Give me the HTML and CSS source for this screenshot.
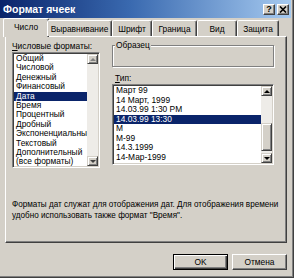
FILE: index.html
```html
<!DOCTYPE html>
<html lang="ru">
<head>
<meta charset="utf-8">
<title>Формат ячеек</title>
<link rel="stylesheet" href="styles.css">
</head>
<body>
<div class="window">
  <div class="titlebar">
    <span class="title">Формат ячеек</span>
    <div class="tbtns">
      <span class="tbtn help">?</span>
      <span class="tbtn close"><svg width="8" height="7" viewBox="0 0 8 7"><path d="M1 0.5 L7 6.5 M7 0.5 L1 6.5" stroke="#000" stroke-width="1.6" fill="none"/></svg></span>
    </div>
  </div>
  <div class="main">
    <div class="tabs">
      <div class="tab active t1">Число</div>
      <div class="tab t2">Выравнивание</div>
      <div class="tab t3">Шрифт</div>
      <div class="tab t4">Граница</div>
      <div class="tab t5">Вид</div>
      <div class="tab t6">Защита</div>
    </div>
    <div class="panel">
      <div class="cols">
        <div class="left">
          <div class="label"><u>Ч</u>исловые форматы:</div>
          <div class="listbox cat">
            <ul class="items">
              <li>Общий</li>
              <li>Числовой</li>
              <li>Денежный</li>
              <li>Финансовый</li>
              <li class="sel">Дата</li>
              <li>Время</li>
              <li>Процентный</li>
              <li>Дробный</li>
              <li>Экспоненциальный</li>
              <li>Текстовый</li>
              <li>Дополнительный</li>
              <li>(все форматы)</li>
            </ul>
            <div class="scroll">
              <div class="sbtn"><span class="arrow up dis"></span></div>
              <div class="track"></div>
              <div class="sbtn"><span class="arrow down dis"></span></div>
            </div>
          </div>
        </div>
        <div class="right">
          <div class="sample"><span class="legend">Образец</span></div>
          <div class="label type-label"><u>Т</u>ип:</div>
          <div class="listbox type">
            <ul class="items">
              <li>Март 99</li>
              <li>14 Март, 1999</li>
              <li>14.03.99 1:30 PM</li>
              <li class="sel">14.03.99 13:30</li>
              <li>М</li>
              <li>М-99</li>
              <li>14.3.1999</li>
              <li>14-Мар-1999</li>
            </ul>
            <div class="scroll">
              <div class="sbtn"><span class="arrow up"></span></div>
              <div class="track"><div class="thumb"></div></div>
              <div class="sbtn"><span class="arrow down"></span></div>
            </div>
          </div>
        </div>
      </div>
      <p class="desc">Форматы дат служат для отображения дат. Для отображения времени<br>удобно использовать также формат "Время".</p>
    </div>
    <div class="buttons">
      <div class="btn default">OK</div>
      <div class="btn">Отмена</div>
    </div>
  </div>
</div>
</body>
</html>
```

FILE: styles.css
```css
* { box-sizing: border-box; }
html, body { margin: 0; padding: 0; }
body {
  width: 294px;
  height: 278px;
  overflow: hidden;
  background: #d4d0c8;
  font-family: "Liberation Sans", Arial, sans-serif;
  font-size: 8.4px;
  color: #000;
}
.window {
  width: 294px;
  height: 278px;
  display: flex;
  flex-direction: column;
  padding: 0 3px 3px 0;
  background: #d4d0c8;
  box-shadow: inset -1px -1px 0 #404040, inset -2px -2px 0 #808080;
}
.titlebar {
  height: 18px;
  flex: none;
  display: flex;
  align-items: center;
  justify-content: space-between;
  padding: 0 2px 0 3px;
  background: linear-gradient(to right, #0a246a 0%, #3a6ab0 45%, #a6caf0 100%);
}
.title {
  color: #fff;
  font-weight: bold;
  font-size: 10.5px;
}
.tbtns { display: flex; gap: 2px; }
.tbtn {
  width: 12px;
  height: 11px;
  background: #d4d0c8;
  border: 1px solid;
  border-color: #fff #404040 #404040 #fff;
  box-shadow: inset -1px -1px 0 #808080;
  display: flex;
  align-items: center;
  justify-content: center;
  font-weight: bold;
  font-size: 9px;
  line-height: 1;
}
.tbtn svg { display: block; }
.main {
  flex: 1;
  display: flex;
  flex-direction: column;
  padding: 0 4px 0 5px;
}
.tabs {
  display: flex;
  align-items: flex-end;
  height: 18px;
  flex: none;
  position: relative;
  z-index: 1;
}
.tab {
  height: 16px;
  display: flex;
  align-items: center;
  justify-content: center;
  border: 1px solid;
  border-bottom: 0;
  border-color: #fff #404040 transparent #fff;
  box-shadow: inset -1px 0 0 #808080;
  border-radius: 2px 2px 0 0;
  background: #d4d0c8;
  padding-top: 1px;
}
.tab.active {
  height: 19px;
  margin: 0 -2px -1px;
  padding-top: 0;
  padding-bottom: 3px;
}
.t1 { width: 46px; }
.t2 { width: 65px; }
.t3 { width: 40px; }
.t4 { width: 45px; }
.t5 { width: 40px; }
.t6 { width: 42px; }
.panel {
  height: 207px;
  flex: none;
  border: 1px solid;
  border-color: #fff #404040 #404040 #fff;
  box-shadow: inset -1px -1px 0 #808080;
  padding: 4px 0 0 6px;
}
.cols { display: flex; gap: 12px; }
.left { width: 88px; }
.right { width: 162px; }
.label { height: 11px; line-height: 11px; white-space: nowrap; }
.type-label { margin-top: 6px; padding-left: 3px; }
.listbox {
  display: flex;
  background: #fff;
  border: 1px solid;
  border-color: #808080 #fff #fff #808080;
  box-shadow: inset 1px 1px 0 #404040, inset -1px -1px 0 #d4d0c8;
  padding: 1px;
  overflow: hidden;
}
.cat { height: 116px; }
.type { height: 81px; }
.items {
  list-style: none;
  margin: 0;
  padding: 0;
  flex: 1;
  min-width: 0;
}
.items li {
  height: 9.4px;
  line-height: 9.4px;
  padding-left: 2px;
  white-space: nowrap;
}
.type .items li { height: 9.5px; line-height: 9.5px; }
.items li.sel { background: #0a246a; color: #fff; }
.scroll {
  width: 11px;
  flex: none;
  display: flex;
  flex-direction: column;
}
.sbtn {
  height: 10px;
  flex: none;
  background: #d4d0c8;
  border: 1px solid;
  border-color: #d4d0c8 #404040 #404040 #d4d0c8;
  box-shadow: inset 1px 1px 0 #fff, inset -1px -1px 0 #808080;
  display: flex;
  align-items: center;
  justify-content: center;
}
.track {
  flex: 1;
  background: #eeece8;
}
.thumb {
  height: 28px;
  margin-top: 27px;
  background: #d4d0c8;
  border: 1px solid;
  border-color: #d4d0c8 #404040 #404040 #d4d0c8;
  box-shadow: inset 1px 1px 0 #fff, inset -1px -1px 0 #808080;
}
.arrow {
  width: 0;
  height: 0;
  border-left: 3px solid transparent;
  border-right: 3px solid transparent;
}
.arrow.up { border-bottom: 3px solid #000; }
.arrow.down { border-top: 3px solid #000; }
.arrow.up.dis { border-bottom-color: #808080; }
.arrow.down.dis { border-top-color: #404040; }
.sample {
  position: relative;
  margin-top: 4px;
  height: 22px;
  border: 1px solid #808080;
  box-shadow: 1px 1px 0 #fff, inset 1px 1px 0 #fff;
}
.legend {
  position: absolute;
  left: 2px;
  top: -6px;
  padding: 0 1px;
  background: #d4d0c8;
  line-height: 11px;
}
.desc {
  margin: 32px 0 0;
  font-size: 8.15px;
  line-height: 10.5px;
  white-space: nowrap;
}
.buttons {
  display: flex;
  justify-content: flex-end;
  gap: 4px;
  margin-top: 11px;
}
.btn {
  width: 55px;
  height: 16px;
  display: flex;
  align-items: center;
  justify-content: center;
  background: #d4d0c8;
  border: 1px solid;
  border-color: #fff #404040 #404040 #fff;
  box-shadow: inset -1px -1px 0 #808080;
}
.btn.default {
  border-color: #000;
  box-shadow: inset 1px 1px 0 #fff, inset -1px -1px 0 #404040, inset -2px -2px 0 #808080;
}
```
